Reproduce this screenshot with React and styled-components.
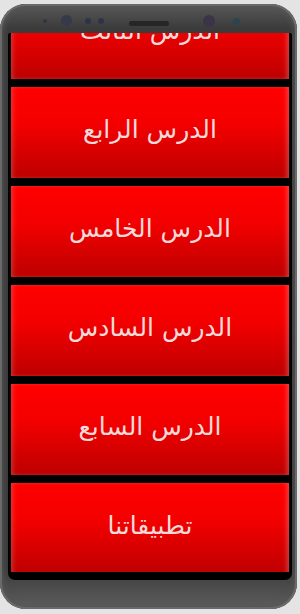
import React, { useLayoutEffect, useRef } from "react"
import styled, { createGlobalStyle } from "styled-components"

const GlobalStyle = createGlobalStyle`
  html, body {
    margin: 0;
    padding: 0;
    background: #e4e4e4;
    font-family: "DejaVu Sans", "Noto Sans", sans-serif;
  }
`

const Page = styled.div`
  width: 300px;
  height: 614px;
  padding: 4px 3px 5px 0;
  box-sizing: border-box;
`

const Phone = styled.div`
  height: 100%;
  border-radius: 26px;
  background: linear-gradient(
    to bottom,
    #5a5a5a 0%,
    #3b3b3b 4%,
    #3a3a3a 93%,
    #5e5e5e 100%
  );
  box-shadow: inset 0 0 0 2px #6a6a6a, inset 0 0 6px 3px #555;
  display: flex;
  flex-direction: column;
  padding: 0 5px 0 8px;
  box-sizing: border-box;
`

const Bezel = styled.div`
  flex: 0 0 29px;
  position: relative;
`

const Dot = styled.span`
  position: absolute;
  left: ${({ x }) => x}px;
  top: ${({ y }) => y}px;
  width: ${({ size }) => size}px;
  height: ${({ size }) => size}px;
  border-radius: 50%;
  background: ${({ color }) => color};
  filter: blur(0.6px);
`

const Speaker = styled.span`
  position: absolute;
  left: 121px;
  top: 17px;
  width: 40px;
  height: 5px;
  border-radius: 3px;
  background: #262626;
`

const Screen = styled.div`
  flex: 0 0 547px;
  background: #000;
  border-radius: 2px 2px 7px 7px;
  padding: 0 3px;
  box-sizing: border-box;
  overflow: hidden;
`

const List = styled.div`
  height: 539px;
  overflow-y: scroll;
  scrollbar-width: none;
  display: flex;
  flex-direction: column;
  gap: 8px;
  &::-webkit-scrollbar {
    display: none;
  }
`

const Lesson = styled.button`
  flex: 0 0 91px;
  border: none;
  margin: 0;
  padding: 0 0 6px;
  display: flex;
  align-items: center;
  justify-content: center;
  background: linear-gradient(to bottom, #ff0000 0%, #f40000 40%, #bd0000 100%);
  box-shadow: inset 4px 0 5px -2px rgba(255, 255, 255, 0.18),
    inset -4px 0 5px -2px rgba(255, 255, 255, 0.25);
  color: #f6dada;
  font-family: "DejaVu Sans", "Noto Sans", sans-serif;
  font-size: 25px;
  direction: rtl;
`

const items = [
  "الدرس الأول",
  "الدرس الثاني",
  "الدرس الثالث",
  "الدرس الرابع",
  "الدرس الخامس",
  "الدرس السادس",
  "الدرس السابع",
  "تطبيقاتنا",
]

const dots = [
  { x: 35, y: 15, size: 4, color: "#2f3440" },
  { x: 53, y: 11, size: 11, color: "#343a4a" },
  { x: 77, y: 14, size: 6, color: "#2f3348" },
  { x: 90, y: 14, size: 6, color: "#2f3348" },
  { x: 195, y: 11, size: 12, color: "#3b3449" },
  { x: 225, y: 14, size: 7, color: "#2c4350" },
]

const App = () => {
  const listRef = useRef(null)

  useLayoutEffect(() => {
    // show the list scrolled to the middle of the third lesson
    if (listRef.current) listRef.current.scrollTop = 2 * 99 + 45
  }, [])

  return (
    <>
      <GlobalStyle />
      <Page>
        <Phone>
          <Bezel>
            {dots.map((d, i) => (
              <Dot key={i} {...d} />
            ))}
            <Speaker />
          </Bezel>
          <Screen>
            <List ref={listRef}>
              {items.map(item => (
                <Lesson key={item}>{item}</Lesson>
              ))}
            </List>
          </Screen>
        </Phone>
      </Page>
    </>
  )
}

export default App
